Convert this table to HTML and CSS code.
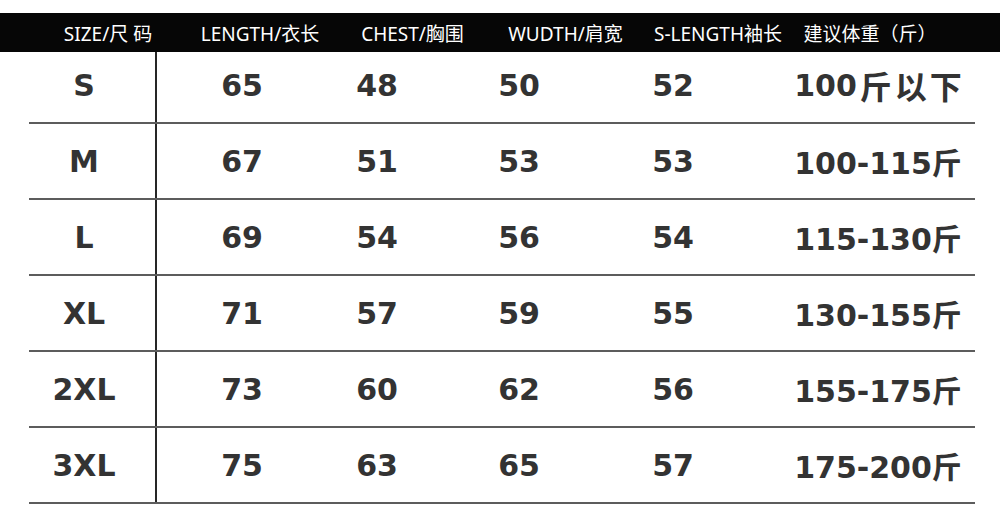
FILE: index.html
```html
<!DOCTYPE html>
<html lang="zh">
<head>
<meta charset="utf-8">
<title>尺码表</title>
<link rel="stylesheet" href="styles.css">
</head>
<body>
<div class="head">
  <div class="hc">SIZE/尺 码</div>
  <div class="hc">LENGTH/衣长</div>
  <div class="hc">CHEST/胸围</div>
  <div class="hc">WUDTH/肩宽</div>
  <div class="hc">S-LENGTH袖长</div>
  <div class="hc">建议体重（斤）</div>
</div>
<div class="table">
  <div class="row first"><div class="c size">S</div><div class="c">65</div><div class="c">48</div><div class="c">50</div><div class="c">52</div><div class="c w">100<span class="cjk">斤以下</span></div></div>
  <div class="row"><div class="c size">M</div><div class="c">67</div><div class="c">51</div><div class="c">53</div><div class="c">53</div><div class="c w">100-115斤</div></div>
  <div class="row"><div class="c size">L</div><div class="c">69</div><div class="c">54</div><div class="c">56</div><div class="c">54</div><div class="c w">115-130斤</div></div>
  <div class="row"><div class="c size">XL</div><div class="c">71</div><div class="c">57</div><div class="c">59</div><div class="c">55</div><div class="c w">130-155斤</div></div>
  <div class="row"><div class="c size">2XL</div><div class="c">73</div><div class="c">60</div><div class="c">62</div><div class="c">56</div><div class="c w">155-175斤</div></div>
  <div class="row"><div class="c size">3XL</div><div class="c">75</div><div class="c">63</div><div class="c">65</div><div class="c">57</div><div class="c w">175-200斤</div></div>
</div>
</body>
</html>
```
FILE: styles.css
```css
html, body {
  margin: 0;
  padding: 0;
  background: #ffffff;
}
body {
  padding-top: 13px;
  width: 1000px;
  height: 532px;
  overflow: hidden;
}
.head {
  height: 39px;
  background: #060606;
  color: #ffffff;
  display: grid;
  grid-template-columns: 152px 152px 153px 153px 152px 152px;
  padding-left: 32px;
  font-family: "Noto Sans", "Noto Sans CJK SC", sans-serif;
  font-size: 19px;
  align-items: center;
}
.hc {
  display: flex;
  justify-content: center;
  white-space: nowrap;
}
.table {
  margin-left: 29px;
  width: 946px;
}
.row {
  display: grid;
  grid-template-columns: 128px 170px 100px 184px 124px 240px;
  height: 74px;
  border-bottom: 2px solid #5c5c5c;
  align-items: stretch;
}
.row.first {
  height: 70px;
}
.row.first .c {
  padding-bottom: 4px;
}
.c {
  display: flex;
  align-items: center;
  justify-content: center;
  white-space: nowrap;
  font-family: "DejaVu Sans", "Noto Sans CJK SC", sans-serif;
  font-weight: bold;
  font-size: 30px;
  color: #333333;
}
.c.size {
  border-right: 2px solid #262626;
  padding-right: 16px;
}
.c.w {
  padding-left: 46px;
}
.cjk {
  font-size: 32px;
  letter-spacing: 3px;
  margin-left: 3px;
  margin-right: -3px;
}
```
